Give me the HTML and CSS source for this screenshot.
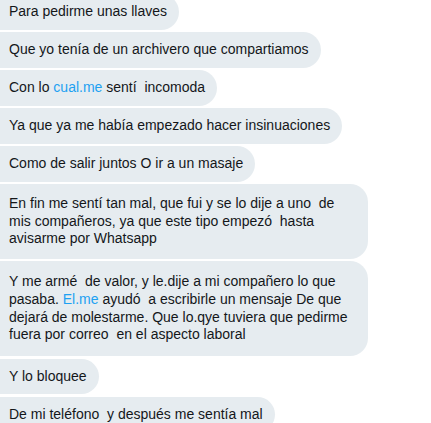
FILE: index.html
```html
<!DOCTYPE html>
<html lang="es">
<head>
<meta charset="utf-8">
<title>Mensajes</title>
<link rel="stylesheet" href="styles.css">
</head>
<body>
<main class="thread">
  <div class="bubble">Para pedirme unas llaves</div>
  <div class="bubble">Que yo tenía de un archivero que compartiamos</div>
  <div class="bubble">Con lo <span class="link">cual.me</span> sentí  incomoda</div>
  <div class="bubble">Ya que ya me había empezado hacer insinuaciones</div>
  <div class="bubble">Como de salir juntos O ir a un masaje</div>
  <div class="bubble bubble--long">En fin me sentí tan mal, que fui y se lo dije a uno  de mis compañeros, ya que este tipo empezó  hasta avisarme por Whatsapp</div>
  <div class="bubble bubble--long bubble--tall">Y me armé  de valor, y le.dije a mi compañero lo que pasaba. <span class="link">El.me</span> ayudó  a escribirle un mensaje De que dejará de molestarme. Que lo.qye tuviera que pedirme fuera por correo  en el aspecto laboral</div>
  <div class="bubble">Y lo bloquee</div>
  <div class="bubble">De mi teléfono  y después me sentía mal</div>
</main>
</body>
</html>
```

FILE: styles.css
```css
html, body {
  margin: 0;
  padding: 0;
  background: #ffffff;
}

body {
  font-family: "Liberation Sans", Arial, sans-serif;
  font-size: 14px;
  color: #14171a;
  overflow: hidden;
}

/* received-message column, scrolled so the first bubble sits under the top edge */
.thread {
  display: flex;
  flex-direction: column;
  align-items: flex-start;
  gap: 2.5px;
  margin-top: -6px;
}

.bubble {
  box-sizing: border-box;
  max-width: 368px;
  padding: 9px 12px 9px 9px;
  line-height: 17.5px;
  background: #e6ecf0;
  border-radius: 0 18px 18px 0;
  white-space: pre-wrap;
}

.bubble--long {
  padding-top: 11px;
  padding-bottom: 11px;
}

.bubble--tall {
  line-height: 17.75px;
  padding-top: 12px;
  padding-bottom: 12px;
}

.link {
  color: #1da1f2;
}
```
